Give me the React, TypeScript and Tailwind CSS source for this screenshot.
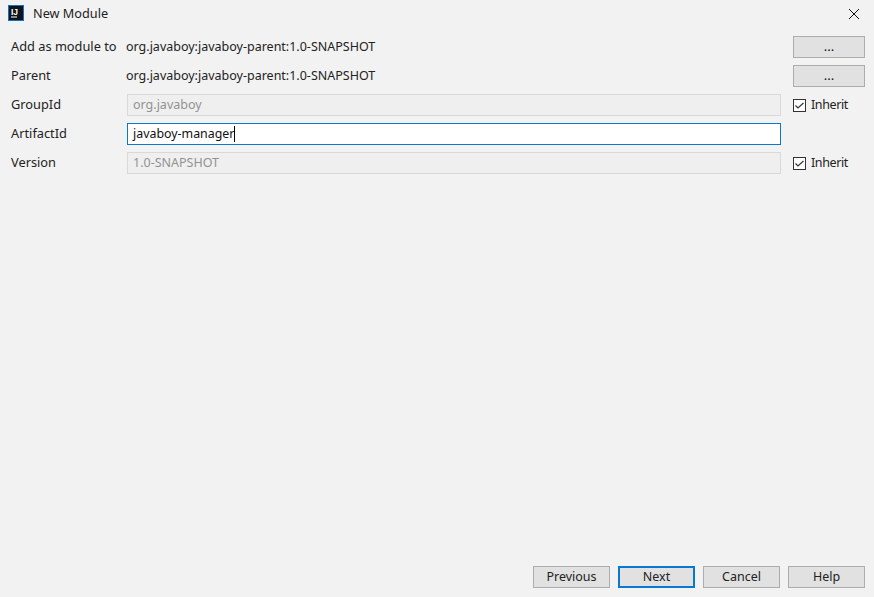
import React from 'react';

const font = 'font-["Noto_Sans","Liberation_Sans",sans-serif]';

const Check = () => (
  <span className="flex h-[13px] w-[13px] shrink-0 items-center justify-center border border-[#333333] bg-white">
    <svg width="11" height="11" viewBox="0 0 11 11" fill="none" stroke="#333333" strokeWidth="1.2">
      <path d="M1.5 5.5 L4 8 L9.5 3" />
    </svg>
  </span>
);

const Inherit = () => (
  <div className="flex items-center gap-[5px] pl-3 text-[12.5px] tracking-[-0.4px] text-[#222222]">
    <Check />
    <span>Inherit</span>
  </div>
);

const DotsButton = () => (
  <button className="ml-3 flex h-[22px] w-[72px] items-center justify-center border border-[#adadad] bg-[#e1e1e1] text-[13px] text-[#111111]">
    ...
  </button>
);

const Label = ({ text }: { text: string }) => (
  <div className="text-[12.8px] text-[#222222]">{text}</div>
);

const DisabledField = ({ value }: { value: string }) => (
  <div className="flex h-[22px] items-center border border-[#d9d9d9] bg-[#efefef] px-[5px] text-[12.5px] text-[#929292]">
    {value}
  </div>
);

const FooterButton = ({ text, primary }: { text: string; primary?: boolean }) => (
  <button
    className={`flex h-[22px] w-[77px] items-center justify-center bg-[#e1e1e1] text-[12.5px] text-[#222222] ${
      primary ? 'border-2 border-[#0a78d0]' : 'border border-[#adadad]'
    }`}
  >
    {text}
  </button>
);

export default function App() {
  return (
    <div className={`flex h-[597px] w-[874px] flex-col overflow-hidden bg-[#f2f2f2] ${font}`}>
      {/* title bar */}
      <div className="flex h-[28px] items-center pl-2 pr-[14px]">
        <svg width="16" height="16" viewBox="0 0 16 16" className="-mt-[2px] shrink-0">
          <rect width="16" height="16" fill="#0b74c8" />
          <rect x="1" y="1" width="14" height="14" fill="#111318" />
          <text x="3" y="9.5" fontSize="8.5" fontWeight="700" fill="#ffffff" fontFamily="Liberation Sans">IJ</text>
          <rect x="3" y="11.5" width="6" height="1" fill="#ffffff" />
        </svg>
        <span className="ml-[9px] text-[12.7px] text-[#222222]">New Module</span>
        <svg width="12" height="12" viewBox="0 0 12 12" className="ml-auto" stroke="#111111" strokeWidth="1" fill="none">
          <path d="M1 1 L11 11 M11 1 L1 11" />
        </svg>
      </div>

      {/* form */}
      <div className="grid grid-cols-[116px_654px_84px] items-center gap-y-[7px] pl-[11px] pt-2">
        <Label text="Add as module to" />
        <div className="-ml-px text-[12.5px] text-[#222222]">org.javaboy:javaboy-parent:1.0-SNAPSHOT</div>
        <DotsButton />

        <Label text="Parent" />
        <div className="-ml-px text-[12.5px] text-[#222222]">org.javaboy:javaboy-parent:1.0-SNAPSHOT</div>
        <DotsButton />

        <Label text="GroupId" />
        <DisabledField value="org.javaboy" />
        <Inherit />

        <Label text="ArtifactId" />
        <div className="flex h-[22px] items-center border border-[#0a78d0] bg-white px-[5px] text-[12.4px] text-[#111111]">
          javaboy-manager
          <span className="h-[16px] w-px bg-black" />
        </div>
        <div />

        <Label text="Version" />
        <DisabledField value="1.0-SNAPSHOT" />
        <Inherit />
      </div>

      {/* footer */}
      <div className="mt-auto flex justify-end gap-2 pb-[9px] pr-[9px]">
        <FooterButton text="Previous" />
        <FooterButton text="Next" primary />
        <FooterButton text="Cancel" />
        <FooterButton text="Help" />
      </div>
    </div>
  );
}
